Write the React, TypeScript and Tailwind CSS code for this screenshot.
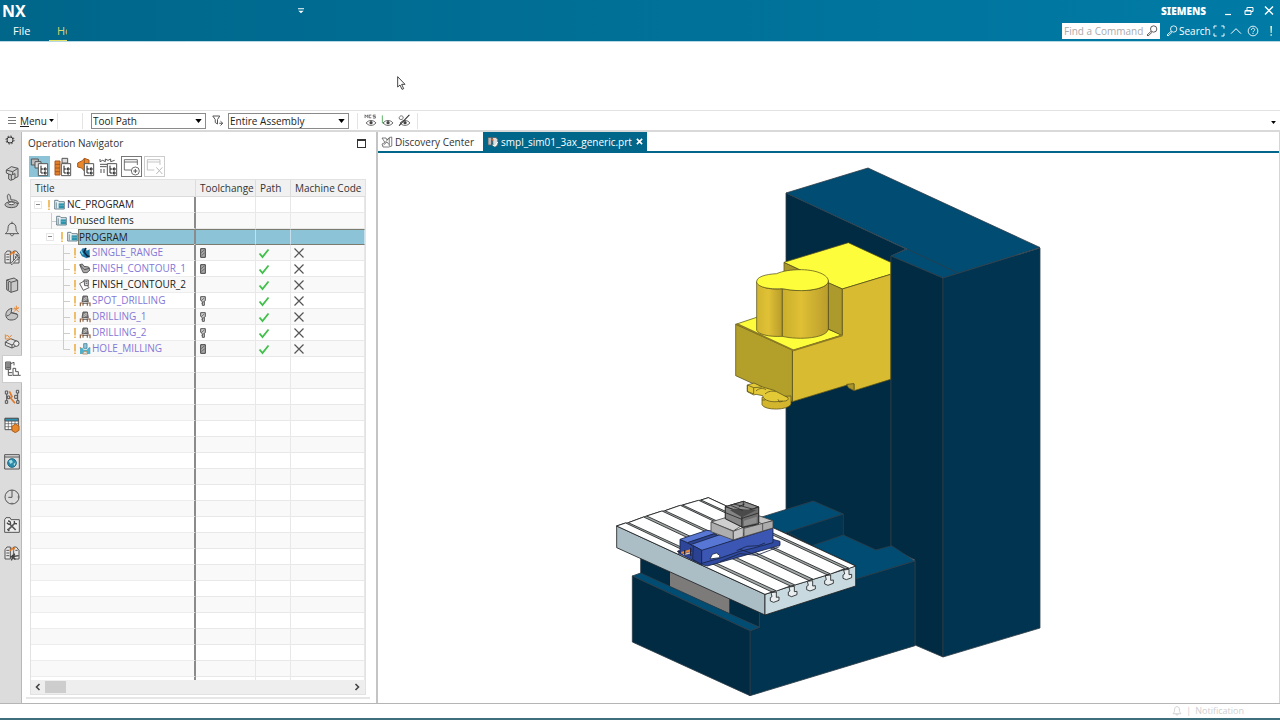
import { ReactNode } from "react";

type Kind = "range" | "contour" | "contour2" | "drill" | "mill";

interface Operation {
  name: string;
  kind: Kind;
  tool: "bar" | "drill" | null;
  visited?: boolean;
}

const operations: Operation[] = [
  { name: "SINGLE_RANGE", kind: "range", tool: "bar" },
  { name: "FINISH_CONTOUR_1", kind: "contour", tool: "bar" },
  { name: "FINISH_CONTOUR_2", kind: "contour2", tool: null, visited: true },
  { name: "SPOT_DRILLING", kind: "drill", tool: "drill" },
  { name: "DRILLING_1", kind: "drill", tool: "drill" },
  { name: "DRILLING_2", kind: "drill", tool: "drill" },
  { name: "HOLE_MILLING", kind: "mill", tool: "bar" },
];

const emptyRows = Array.from({ length: 21 }, (_, i) => i);

function Icon({ children, className = "size-4" }: { children: ReactNode; className?: string }) {
  return (
    <svg viewBox="0 0 48 48" fill="none" stroke="#555" strokeWidth="3" aria-hidden="true" className={`shrink-0 ${className}`}>
      {children}
    </svg>
  );
}

function Caret({ className = "h-[4px] w-[7px]" }: { className?: string }) {
  return (
    <svg viewBox="0 0 8 5" aria-hidden="true" className={`shrink-0 text-black ${className}`}>
      <path d="M0 0h8L4 5z" fill="currentColor" />
    </svg>
  );
}

/* ---------- window header ---------- */

function Magnifier({ className = "size-3" }: { className?: string }) {
  return (
    <svg viewBox="0 0 36 36" fill="none" stroke="currentColor" strokeWidth="2.6" aria-hidden="true" className={`shrink-0 ${className}`}>
      <circle cx="23" cy="12" r="9.5" />
      <path d="M15 19 3 30l3 3 12-11" />
    </svg>
  );
}

function Header() {
  return (
    <header className="flex h-[41px] shrink-0 flex-col bg-linear-to-r from-[#00668a] to-[#007ba6] text-white">
      <div className="flex h-[21px] items-center pr-[5px] pl-[2px]">
        <h1 className="w-6 font-['Noto_Sans',sans-serif] text-[16px] leading-[18px] font-bold">NX</h1>
        <button aria-label="Customize quick access" className="ml-[272px] flex h-4 w-2 items-center">
          <svg viewBox="0 0 18 18" className="size-1.5" aria-hidden="true">
            <path d="M0 1h18v3H0zM1 8h16l-8 8z" fill="#fff" />
          </svg>
        </button>
        <span className="ml-auto font-['Noto_Sans',sans-serif] text-[10px] leading-4 font-black">SIEMENS</span>
        <div className="ml-4 flex w-[53px] items-center justify-between">
          <button aria-label="Minimize" className="flex size-3 items-center justify-center">
            <svg viewBox="0 0 12 12" className="size-3" aria-hidden="true">
              <path d="M3 9.500h6" stroke="#fff" strokeWidth="1.200" />
            </svg>
          </button>
          <button aria-label="Restore" className="flex size-3 items-center justify-center">
            <svg viewBox="0 0 12 12" className="size-3" fill="none" stroke="#fff" aria-hidden="true">
              <path d="M2 5.500h6v4H2zM4 5V2.500h6v4H8M2 6h6" />
            </svg>
          </button>
          <button aria-label="Close" className="flex size-3 items-center justify-center">
            <svg viewBox="0 0 12 12" className="size-3" fill="none" stroke="#fff" strokeWidth="1.400" aria-hidden="true">
              <path d="m2 1.500 8 8m0-8-8 8" />
            </svg>
          </button>
        </div>
      </div>
      <div className="flex h-5 items-center pr-1 pl-[13px]">
        <nav className="flex h-5 items-center">
          <a href="#file" className="w-9 text-[11px] leading-[18px]">File</a>
          <a href="#home" className="block h-[19px] w-[18px] overflow-hidden border-b border-[#e3e36c] pl-2 text-[11px] leading-[18px] whitespace-nowrap text-[#d7d56a]">
            Ho
          </a>
        </nav>
        <label className="ml-auto flex h-4 w-[98px] items-center bg-white px-0.5 text-[#444]">
          <input aria-label="Find a Command" placeholder="Find a Command" className="w-0 grow text-[10px] leading-4 outline-none placeholder:text-[#aaa]" />
          <Magnifier />
        </label>
        <button className="ml-1.5 flex w-[43px] items-center gap-px text-[10px] leading-4">
          <Magnifier />
          Search
        </button>
        <div className="ml-1 flex items-center gap-[5px]">
          <button aria-label="Full screen" className="size-3">
            <svg viewBox="0 0 36 36" className="size-3" fill="none" stroke="#fff" strokeWidth="3" aria-hidden="true">
              <path d="M3 11V3h8M25 3h8v8M33 25v8h-8M11 33H3v-8" />
            </svg>
          </button>
          <button aria-label="Minimize ribbon" className="size-3">
            <svg viewBox="0 0 36 36" className="size-3" fill="none" stroke="#fff" strokeWidth="3" aria-hidden="true">
              <path d="m3 26 15-15 15 15" />
            </svg>
          </button>
          <button aria-label="Help" className="size-3">
            <svg viewBox="0 0 36 36" className="size-3" fill="none" stroke="#fff" strokeWidth="2.600" aria-hidden="true">
              <circle cx="18" cy="18" r="14.500" />
              <path d="M13 15c0-7 10-7 10-1 0 4-5 4-5 8m0 2v3" />
            </svg>
          </button>
          <button aria-label="Alerts" className="size-3">
            <svg viewBox="0 0 36 36" className="size-3" aria-hidden="true">
              <path d="M19 3h5l-1 21h-3zM19.500 28h4v4h-4z" fill="#eef3c4" />
            </svg>
          </button>
        </div>
      </div>
    </header>
  );
}

/* ---------- selection toolbar ---------- */

function Picker({ label, options, className }: { label: string; options: string[]; className: string }) {
  return (
    <label className={`relative flex h-4 items-center border border-[#8a8a8a] bg-white ${className}`}>
      <select aria-label={label} className="w-full appearance-none pl-px text-[10px] leading-[14px] outline-none">
        {options.map((o) => (
          <option key={o}>{o}</option>
        ))}
      </select>
      <Caret className="pointer-events-none absolute right-[3px] h-[4px] w-[7px]" />
    </label>
  );
}

function Eye() {
  return (
    <>
      <path d="M8 33c9-12 27-12 36 0-9 12-27 12-36 0z" fill="#fff" stroke="#444" />
      <circle cx="26" cy="32" r="6" fill="#444" stroke="none" />
    </>
  );
}

function Toolbar() {
  return (
    <div className="flex h-[22px] shrink-0 items-center border-t border-b-2 border-[#e2e2e2] border-b-[#d9d9d9] pr-1 pl-2">
      <button className="flex w-[49px] items-center gap-1 text-[10px] leading-4">
        <svg viewBox="0 0 8 8" className="size-2 shrink-0" stroke="#777" aria-hidden="true">
          <path d="M0 .5h8M0 3.500h8M0 6.500h8" />
        </svg>
        <span><span className="underline">M</span>enu</span>
        <Caret className="-ml-0.5 h-[3px] w-[5px]" />
      </button>
      <span className="h-4 w-[26px] border-x border-[#e4e4e4]" />
      <Picker label="Type filter" options={["Tool Path", "No Selection Filter"]} className="ml-2 w-[115px]" />
      <button aria-label="Selection filter" className="ml-1.5 flex">
        <Icon className="size-3">
          <path d="M3 4h28l-9 14v18l-9-6V18zM34 25l9 8-9 9m9-9H29" strokeWidth="4" />
        </Icon>
      </button>
      <Picker label="Selection scope" options={["Entire Assembly", "Within Work Part Only"]} className="ml-1 w-[121px]" />
      <div className="ml-2 flex h-4 items-center gap-1 border-x border-[#e4e4e4] px-1.5">
        <button aria-label="Show MCS" className="flex">
          <Icon className="size-[13px]">
            <path d="M4 15V3l5 6 5-6v12M27 4h-8v10h8M43 4h-9v5h8v6h-9" />
            <Eye />
          </Icon>
        </button>
        <button aria-label="Show tool path" className="flex">
          <Icon className="size-[13px]">
            <path d="M5 5v28h10" stroke="#3fa34a" />
            <Eye />
          </Icon>
        </button>
        <button aria-label="Hide all" className="flex">
          <Icon className="size-[13px]">
            <path d="M4 14c2-8 12-10 15-3 3 8-8 12-13 8z" />
            <Eye />
            <path d="M42 3 4 43" stroke="#333" strokeWidth="4" />
          </Icon>
        </button>
      </div>
      <button aria-label="More options" className="mt-1 ml-auto flex">
        <Caret className="h-[3px] w-[5px]" />
      </button>
    </div>
  );
}

/* ---------- resource bar ---------- */

const blocks = (
  <>
    <path d="M3 42V14l6-8h10v36zM29 42V6h8l8 10v26z" fill="#e9e9e9" />
    <path d="M7 16h9M7 24h9M7 32h9M34 16h7" />
    <path d="m19 18 5-9 4 6 4-8" stroke="#e27a22" strokeWidth="4" />
  </>
);

const resources: { label: string; gap?: string; active?: boolean; art: ReactNode }[] = [
  {
    label: "Assembly Navigator",
    gap: "mt-[11px]",
    art: (
      <>
        <path d="m7 15 15-10 20 5v25l-9 4-2 3-11 4-6-4V27l-7-3z" fill="#cfcfcf" />
        <path d="m7 15 19 5 16-10M26 20v10m-12-3 8 3 11-4v13M22 30v15" />
      </>
    ),
  },
  {
    label: "Constraint Navigator",
    art: (
      <>
        <path d="M13 4c-5 2-4 14 4 24l27 4c-2-9-14-13-23-11C20 12 18 3 13 4z" fill="#d0d0d0" />
        <ellipse cx="22" cy="35" rx="19" ry="9" fill="#bbb" />
        <ellipse cx="22" cy="31" rx="9" ry="4" fill="#eee" />
      </>
    ),
  },
  {
    label: "Notifications",
    art: (
      <path d="M24 2v5M24 7c-9 0-12 7-12 16 0 8-3 10-8 15h40c-5-5-8-7-8-15 0-9-3-16-12-16zM19 39c0 7 10 7 10 0" />
    ),
  },
  {
    label: "Part Navigator",
    art: (
      <>
        {blocks}
        <path d="M20 44 35 28c-2-6 2-10 7-9l-4 6 3 3 5-4c1 6-3 9-8 8L24 47z" fill="#eee" />
      </>
    ),
  },
  {
    label: "Reuse Library",
    art: (
      <>
        <path d="m8 9 22-6 11 7v30l-20 6L8 38z" fill="#c9c9c9" />
        <path d="m8 9 13 7v30M21 16l20-6M13 15v24" />
      </>
    ),
  },
  {
    label: "Machining Features",
    art: (
      <>
        <path d="M6 34c-2-12 5-22 18-24l-3 13 19 5c4 8-3 16-16 17C14 46 8 42 6 34z" fill="#c5c5c5" />
        <path d="M8 33c8-2 12-6 13-10 6 0 14 2 19 5" />
        <path d="m30 8 14 12M44 6 30 20M37 2v10m-9 0 16-2" stroke="#e58a3a" />
      </>
    ),
  },
  {
    label: "Feature Explorer",
    art: (
      <>
        <path d="m4 27 16-10 20 8v12L24 45 4 37z" fill="#e2e2e2" />
        <path d="m4 27 20 9 16-11M24 36v9" />
        <path d="M4 4v14h18M4 12l6-6 6 8 7-8" stroke="#e58a3a" />
        <circle cx="37" cy="32" r="8" fill="#eee" />
      </>
    ),
  },
  {
    label: "Operation Navigator",
    active: true,
    art: (
      <>
        <path d="M2 3h15v22H2zM4 9h11M4 15h11M4 20h11" fill="#bbb" />
        <path d="M17 8l10-4v9M10 26v17h12M10 35h12M24 22h8v10h8v11h7M24 22v21h16" />
      </>
    ),
  },
  {
    label: "Machine Tool Navigator",
    art: (
      <>
        <path d="m16 7 8 16-4 4 13 16" stroke="#e07a28" strokeWidth="5" />
        <path d="M4 6h7v9H4zM10 21h7v8h-7zM4 35h7v8H4zM37 4h7v8h-7zM32 19h8v9h-8zM38 35h7v8h-7zM8 15v20m33-23v23" />
      </>
    ),
  },
  {
    label: "Tool Library",
    art: (
      <>
        <path d="M3 4h40v34H3z" fill="#fff" />
        <path d="M3 4h40v8H3z" fill="#2a93b5" />
        <path d="M3 20h40M3 29h40M13 12v26M23 12v26M33 12v26" strokeWidth="2" />
        <path d="m24 28 10-7 11 6v13l-11 7-10-6z" fill="#e8882c" stroke="#a9601d" />
      </>
    ),
  },
  {
    label: "Web Browser",
    gap: "mt-[9px]",
    art: (
      <>
        <path d="M2 2h44v43H2zM2 9h44" fill="#ddd" />
        <circle cx="24" cy="27" r="13" fill="#2b8ca9" stroke="#1c6c88" />
        <path d="m14 20 9-3 4 8-8 5zM28 30l7-5-3 11z" fill="#a5dbe6" stroke="none" />
      </>
    ),
  },
  {
    label: "History",
    gap: "mt-[7px]",
    art: (
      <>
        <circle cx="24" cy="24" r="21" />
        <path d="M24 3v22H13M24 41v4M41 24h4" />
      </>
    ),
  },
  {
    label: "Process Studio",
    art: (
      <>
        <path d="M2 46V8l4-6h12l3 6h25v38z" fill="#eee" />
        <path d="m13 38 20-20M17 21l18 18" stroke="#555" strokeWidth="5" />
        <path d="M9 17c3 6 8 6 12 2M12 12c6 0 8 3 7 7M31 12c-1 6 2 9 8 8M10 37l6 5" stroke="#444" strokeWidth="4" />
      </>
    ),
  },
  { label: "Roles", art: (<>{blocks}<path d="m18 36 26-4M22 46l10-20m-8 4 10 14" strokeWidth="4" stroke="#444" /></>) },
];

function ResourceBar() {
  return (
    <aside className="flex w-[22px] shrink-0 flex-col border-r border-[#b9b9b9] bg-[#dcdcdc]">
      <button aria-label="Resource bar options" className="flex h-4 items-center justify-center">
        <svg viewBox="0 0 30 30" className="mr-0.5 size-2.5" fill="none" stroke="#333" strokeWidth="3" aria-hidden="true">
          <circle cx="15" cy="15" r="9" />
          <circle cx="15" cy="15" r="12" strokeDasharray="4.700 4.700" />
        </svg>
      </button>
      {resources.map((r) => (
        <button
          key={r.label}
          aria-label={r.label}
          className={`ml-0.5 flex h-7 shrink-0 items-center justify-center ${r.gap ?? ""} ${r.active ? "-mr-px border-y border-l border-[#ccc] bg-white" : ""}`}
        >
          <Icon>{r.art}</Icon>
        </button>
      ))}
    </aside>
  );
}

/* ---------- operation navigator ---------- */

const treeBadge = (
  <>
    <path d="M25 20h28v36H25z" fill="#fff" strokeWidth="3" />
    <path d="M33 26v22h7M33 36h7M43 33h5v6h-5zM43 45h5v6h-5z" stroke="#222" />
  </>
);

const views: { label: string; style: string; art: ReactNode }[] = [
  {
    label: "Program Order View",
    style: "bg-[#8cc3d6]",
    art: (<><path d="M4 6h21v18H4z" fill="#bbb" /><path d="M15 14h18v19H15z" fill="#ddd" />{treeBadge}</>),
  },
  {
    label: "Machine Tool View",
    style: "",
    art: (<><path d="M6 12h15v42H6zM6 22h15M6 33h15M6 44h15" fill="#e2802c" stroke="#a8571a" /><path d="M27 4h17v14H27z" fill="#ddd" />{treeBadge}</>),
  },
  {
    label: "Geometry View",
    style: "",
    art: (<><path d="m5 18 14-7 6-7 14 5v26l-14 7-8-9-12-3z" fill="#e8882c" stroke="#a8571a" /><path d="M25 4v18" stroke="#a8571a" />{treeBadge}</>),
  },
  {
    label: "Machining Method View",
    style: "",
    art: (<><path d="M3 6v8l8-4 8 4V6l8 4 8-4v8l12-4M3 22h45M3 29h20M6 36v12m9-12v12" />{treeBadge}</>),
  },
  {
    label: "Create Operation",
    style: "border border-[#777]",
    art: (<><path d="M46 24V8H7v31h21M7 15h39" strokeWidth="2.500" /><circle cx="40" cy="42" r="12" fill="#fff" strokeWidth="2.500" /><path d="M34 42h12M40 36v12" /></>),
  },
  {
    label: "Delete Operation",
    style: "border border-[#ccc]",
    art: (<g stroke="#bbb"><path d="M45 24V8H7v31h21M7 15h38" strokeWidth="2.500" /><path d="m34 31 18 20m0-20L34 51" /></g>),
  },
];

function Folder() {
  return (
    <svg viewBox="0 0 33 33" className="size-[11px] shrink-0" aria-hidden="true">
      <path d="M2 30V4h10l3 4h16v22z" fill="#e6eff2" stroke="#54707c" strokeWidth="2.500" />
      <path d="M7 10v18" stroke="#54707c" strokeWidth="2" />
      <path d="M14 13h16v15H14z" fill="#2e93ac" />
      <path d="M14 19h16" stroke="#6fbccf" strokeWidth="2" />
    </svg>
  );
}

function OperationIcon({ kind }: { kind: Kind }) {
  return (
    <svg viewBox="0 0 36 36" fill="none" stroke="#444" strokeWidth="2.500" className="size-3 shrink-0" aria-hidden="true">
      {kind === "range" && (
        <>
          <path d="M11 4h9l3 7 9-4v22l-9 5-14-6-7-12z" fill="#1c78a5" stroke="none" />
          <path d="m21 3-6 12 10 12 7 2" stroke="#10253f" strokeWidth="5" />
          <path d="M6 10c3 4 1 9 7 12" stroke="#74d4e8" strokeWidth="4" />
        </>
      )}
      {kind === "contour" && (
        <>
          <path d="m2 5 8-2 5 7 14 2 4 9-9 8H13L8 19z" fill="#aaa" />
          <path d="M5 6c0 8 9 9 11 14l16-4" />
        </>
      )}
      {kind === "contour2" && (
        <>
          <path d="m2 14 13-8 15 20-17 8z" fill="#fff" />
          <path d="M15 3h13v17H17zM19 8h6m-5 5h5" fill="#ddd" />
        </>
      )}
      {kind === "drill" && (
        <>
          <path d="M12 3h13l3 17H9z" fill="#888" stroke="#444" />
          <path d="M14 12 24 6M13 18l12-8" stroke="#ddd" strokeWidth="2" />
          <path d="M4 34V24h8v8m13 0v-8h8v10" stroke="#8b5d40" strokeWidth="3.500" />
          <path d="M12 25h13" stroke="#444" />
        </>
      )}
      {kind === "mill" && (
        <>
          <path d="M14 2h10v14H14z" fill="#93c8dc" stroke="#49819a" />
          <path d="M3 14h7l4 6h10l4-6h6v19H3z" fill="#4fb2cc" stroke="none" />
          <path d="M4 12v5M32 12v5M11 33l3-8h9l3 8z" stroke="#b98552" fill="#d6e6e9" />
        </>
      )}
    </svg>
  );
}

function Bang() {
  return (
    <svg viewBox="0 0 4 12" className="h-3 w-1 shrink-0" aria-hidden="true">
      <path d="M1.300 1h1.400v7.500H1.300zM1.300 9.500h1.400v1.500H1.300z" fill="#eca52c" />
    </svg>
  );
}

function Expander() {
  return (
    <button aria-label="Collapse" className="flex size-2 shrink-0 items-center justify-center border border-[#e6e6e6] bg-white">
      <span className="h-px w-1 bg-[#888]" />
    </button>
  );
}

function ToolMark({ tool }: { tool: Operation["tool"] }) {
  if (!tool) return null;
  return (
    <svg viewBox="0 0 18 30" className="ml-1 h-[10px] w-1.5" stroke="#555" strokeWidth="3" aria-hidden="true">
      {tool === "bar" ? (
        <path d="M2 2h14v26H2z" fill="#aaa" stroke="#444" />
      ) : (
        <path d="M2 2h14v11l-3 4v11H7V17l-5-4z" fill="#ccc" />
      )}
      <path d="m4 14 9-8M5 23l9-9" strokeWidth="2.500" />
    </svg>
  );
}

const cell = "h-4 border-b border-[#ededed] p-0";
const dataCell = "h-4 border-r border-b border-[#e8e8e8] p-0";

function OperationTable() {
  return (
    <table className="w-full table-fixed border-separate border-spacing-0 text-[10px] leading-[15px]">
      <colgroup>
        <col />
        <col className="w-[60px]" />
        <col className="w-[35px]" />
        <col className="w-[74px]" />
      </colgroup>
      <thead>
        <tr className="bg-[#f1f1f1] text-left text-[#333]">
          <th className="h-[17px] border-r border-b border-[#dcdcdc] p-0 pl-1 font-normal">Title</th>
          <th className="border-r border-b border-[#dcdcdc] p-0 pl-1 font-normal">Toolchange</th>
          <th className="border-r border-b border-[#dcdcdc] p-0 pl-1 font-normal">Path</th>
          <th className="border-b border-[#dcdcdc] p-0 pl-1 font-normal whitespace-nowrap">Machine Code</th>
        </tr>
      </thead>
      <tbody className="text-[#222] [&>tr:nth-child(even)]:bg-[#f9f9f9] [&>tr>td:first-child]:border-r-2 [&>tr>td:first-child]:border-r-[#8b8b8b]">
        <tr>
          <td className={cell}>
            <div className="flex h-[15px] items-center pl-[3px]">
              <Expander />
              <span className="ml-[5px] flex"><Bang /></span>
              <span className="ml-[3px] flex"><Folder /></span>
              <span className="ml-0.5">NC_PROGRAM</span>
            </div>
          </td>
          <td className={dataCell} /><td className={dataCell} /><td className={dataCell} />
        </tr>
        <tr>
          <td className={cell}>
            <div className="flex h-[15px] items-center pl-5">
              <svg viewBox="0 0 5 16" className="h-4 w-[5px] shrink-0" fill="none" stroke="#ccc" aria-hidden="true">
                <path d="M.5 0v16M.5 8.500H5" />
              </svg>
              <Folder />
              <span className="ml-0.5">Unused Items</span>
            </div>
          </td>
          <td className={dataCell} /><td className={dataCell} /><td className={dataCell} />
        </tr>
        <tr>
          <td className={cell}>
            <div className="flex h-[15px] items-center pl-[15px]">
              <Expander />
              <span className="ml-1.5 flex"><Bang /></span>
              <span className="ml-[3px] flex"><Folder /></span>
              <span className="h-4 grow border-y border-l border-[#7b7b6e] bg-[#8cc3d6] leading-[14px]">PROGRAM</span>
            </div>
          </td>
          {[0, 1, 2].map((i) => (
            <td key={i} className="h-4 border-y border-r border-y-[#7b7b6e] border-r-[#c5e0ea] bg-[#8cc3d6] p-0" />
          ))}
        </tr>
        {operations.map((op, i) => (
          <tr key={op.name}>
            <td className={cell}>
              <div className="flex h-[15px] items-center pl-8">
                <svg viewBox="0 0 8 16" className="h-4 w-2 shrink-0" fill="none" stroke="#ccc" aria-hidden="true">
                  <path d={i === operations.length - 1 ? "M.5 0v8.500H7" : "M.5 0v16M.5 8.500H7"} />
                </svg>
                <span className="ml-0.5 flex"><Bang /></span>
                <span className="ml-0.5 flex"><OperationIcon kind={op.kind} /></span>
                <a href={`#${op.name}`} className={`ml-px whitespace-nowrap ${op.visited ? "text-[#222]" : "text-[#8377d6]"}`}>
                  {op.name}
                </a>
              </div>
            </td>
            <td className={dataCell}><ToolMark tool={op.tool} /></td>
            <td className={dataCell}>
              <svg viewBox="0 0 12 12" className="ml-0.5 size-3" fill="none" stroke="#3fc04a" strokeWidth="1.800" aria-hidden="true">
                <path d="m1.500 6.500 3 3.500 6-7.500" />
              </svg>
            </td>
            <td className={dataCell}>
              <svg viewBox="0 0 12 12" className="ml-0.5 size-3" stroke="#555" strokeWidth="1.200" aria-hidden="true">
                <path d="m1.500 1.500 9 9m0-9-9 9" />
              </svg>
            </td>
          </tr>
        ))}
        {emptyRows.map((r) => (
          <tr key={r}>
            <td className={cell} /><td className={dataCell} /><td className={dataCell} /><td className={dataCell} />
          </tr>
        ))}
      </tbody>
    </table>
  );
}

function Navigator() {
  return (
    <section className="flex w-[356px] shrink-0 flex-col border-r-2 border-[#c4c4c4] pb-1">
      <div className="flex h-[22px] items-center justify-between pr-2.5 pl-1.5">
        <h2 className="text-[10px] leading-5 text-[#333]">Operation Navigator</h2>
        <button aria-label="Maximize" className="size-[9px] border border-t-2 border-[#333]" />
      </div>
      <div className="flex h-[25px] items-center gap-0.5 px-[7px]">
        {views.map((v) => (
          <button key={v.label} aria-label={v.label} className={`flex size-[21px] items-center justify-center ${v.style}`}>
            <svg viewBox="0 0 60 60" fill="none" stroke="#555" strokeWidth="3" className="size-5 shrink-0" aria-hidden="true">
              {v.art}
            </svg>
          </button>
        ))}
      </div>
      <div className="mr-2.5 ml-2 flex min-h-0 grow flex-col border border-[#e2e2e2]">
        <div className="min-h-0 grow basis-0 overflow-hidden">
          <OperationTable />
        </div>
        <div className="flex h-3.5 shrink-0 items-center bg-[#eee]">
          <button aria-label="Scroll left" className="flex w-3.5 justify-center">
            <svg viewBox="0 0 8 8" className="size-2" fill="none" stroke="#444" strokeWidth="1.600" aria-hidden="true"><path d="M5.500 1 2.500 4l3 3" /></svg>
          </button>
          <div className="h-3 w-[21px] bg-[#cdcdcd]" />
          <button aria-label="Scroll right" className="ml-auto flex w-4 justify-center">
            <svg viewBox="0 0 8 8" className="size-2" fill="none" stroke="#444" strokeWidth="1.600" aria-hidden="true"><path d="m2.500 1 3 3-3 3" /></svg>
          </button>
        </div>
      </div>
      <div className="mt-0.5 mr-1.5 ml-1 h-0.5 bg-[#e6e6e6]" />
    </section>
  );
}

/* ---------- graphics window ---------- */

/* table strips between the T-slots: back edge, then front edge */
const strips = [
  "50,138 77,129 516,336 495,343",
  "85,128 131,111 571,318 530,333",
  "140,108 186,93 628,302 585,315",
  "195,92 241,76 682,285 640,298",
  "248,75 296,61 734,266 692,282",
  "303,60 325,53 767,258 748,265",
];

const slots = [521, 575, 630, 684, 739];

function Machine() {
  return (
    <svg viewBox="378 153 901 550" className="h-full w-full" role="img" aria-label="Three axis milling machine model">
      <defs>
        <linearGradient id="cylA"><stop offset="0" stopColor="#d2b52f" /><stop offset=".45" stopColor="#e0c136" /><stop offset="1" stopColor="#b79c2b" /></linearGradient>
        <linearGradient id="cylB"><stop offset="0" stopColor="#caae2c" /><stop offset=".4" stopColor="#dfc035" /><stop offset="1" stopColor="#b99d2c" /></linearGradient>
      </defs>
      <g stroke="#2d3c47" strokeWidth=".8" strokeLinejoin="round">
        <path d="M786 193 906 249l-15 7v294H786z" fill="#002b42" />
        <path d="M786 193 868 168l172 79.500L943 278l-52-22 16-7z" fill="#004c73" />
        <path d="m907 249 51 24" fill="none" />
        <path d="m891 256 52 22v379l-28-12v-85l-24-12z" fill="#002b42" />
        <path d="m943 278 97-30v380l-97 29z" fill="#003450" />
      </g>
      <g transform="translate(600 480) scale(.33333)" stroke="#2d3c47" strokeWidth="2.500" strokeLinejoin="round">
        <path d="m560 155 170-53v66L640 200z" fill="#003450" />
        <path d="m440 125 200-62 90 39-185 60z" fill="#004c73" />
        <path d="M560 223 730 165l98 45 47-13 70 46-200 62z" fill="#004c73" />
        <path d="m450 452 28-10v-60l290-85 177-54v254L450 647z" fill="#003450" />
        <path d="m122 230 356 150v62L122 288z" fill="#002b42" />
        <path d="m210 270 178 80v50l-178-80z" fill="#7d7b7a" stroke="none" />
        <path d="m97 288 25-9 356 163-28 10z" fill="#004c73" />
        <path d="m97 288 353 164v195L97 486z" fill="#002b42" />
      </g>
      <g transform="translate(600 480) scale(.33333)" stroke="#1e2022" strokeWidth="2.500" strokeLinejoin="round">
        <path d="m50 138 23-8 12-2 40-15 15-5 40-13 15-3 40-14 13-3 42-12 13-3 22-7 442 205-272 85z" fill="#a4a9a9" />
        <path d="m50 138 445 205v62L50 203z" fill="#abbec6" />
        <path d="m495 343 272-85v60l-272 87z" fill="#c8d9df" />
        {strips.map((s) => (
          <polygon key={s} points={s} fill="#fff" />
        ))}
        {slots.map((x, i) => (
          <path
            key={x}
            d={`M${x - 8} ${338 - i * 17}l3 12-5 3v10l10 4 16-6v-10l-8 1v-16z`}
            fill="#e9eef0"
          />
        ))}
      </g>
      {/* vise and workpiece */}
      <g transform="translate(600 480) scale(.33333)" stroke="#182446" strokeWidth="2.500" strokeLinejoin="round">
        <path d="m232 214 70 39 20 5 218-62v-12l-28-8-222 40z" fill="#2f4aa0" />
        <path d="m240 178 45 22v44l-45-22z" fill="#2d469a" />
        <path d="m240 178 80-27 38 5-95 32z" fill="#5877d4" />
        <path d="m263 188 78-26 25 10-84 28z" fill="#2d4594" />
        <path d="m272 194 85-29 85 8 76-29-210 68z" fill="#5877d4" />
        <path d="m280 197 25 14v42l-27-15z" fill="#2b4293" />
        <path d="m305 211 214-67v44l-58 16-42 10-58 20-56 16z" fill="#3b56b3" />
        <path d="m330 237 7-14 12-4 10 7v7z" fill="#fff" />
        <path d="m410 212 30-13 35-2 20-8M360 245l60-24 50 5 68-26M420 208l40 14" fill="none" />
        <path d="m244 219 28-8" stroke="#e48a3d" strokeWidth="7" />
        <path d="M250 224l24-6" stroke="#e9c9a8" strokeWidth="4" />
        <path d="M237 210v14M272 203v24M254 210v14" stroke="#25233d" strokeWidth="4" />
        <g stroke="#444">
          <path d="m333 126 50-15 48 22-31 20z" fill="#cfcfcf" />
          <path d="m333 126 67 28v26l-67-25z" fill="#aeaeae" />
          <path d="m400 154 30-12v28l-30 10z" fill="#c5c5c5" />
          <path d="m467 104 52 18-31 10-24-10z" fill="#c6c6c6" />
          <path d="m432 145 87-23v22l-87 26z" fill="#adadad" />
          <path d="m488 132v20" />
        </g>
        <g stroke="#252525">
          <path d="m376 80 54-16 46 17v50l-46 12-54-27z" fill="#777" />
          <path d="m376 80 54-16 46 17-50 17z" fill="#8e8e8e" />
          <path d="m376 80 50 18v43l-50-25z" fill="#858585" />
          <path d="m426 98 50-17v50l-50 11z" fill="#6f6f6f" />
          <path d="m390 91 12-5 68 4-44 22z" fill="#4a4a4a" stroke="none" />
          <path d="m426 115 50-16M376 98l50 20M392 76l36 15M402 72l55 15M416 81l18-9M430 64v14" fill="none" />
          <path d="m432 122 38-12v18l-38 10z" fill="#8d8d8d" stroke="none" />
        </g>
      </g>
      {/* spindle head */}
      <g transform="translate(720 230) scale(.33333)" stroke="#57501c" strokeWidth="2.200" strokeLinejoin="round">
        <path d="m192 97 135 63v40l-135-60z" fill="#a8962c" />
        <path d="M192 97 385 38l127 59v36l-145 44-40-17z" fill="#fdfd3c" />
        <path d="m47 283 63-21 215 36 42 17-148 47z" fill="#fdfd3c" />
        <path d="m325 158 42 19v140l-42-20z" fill="#ad9a2c" />
        <path d="m367 177 145-44v315l-110 34v-20l-17 2-168 51V362l150-46z" fill="#d8bb30" />
        <path d="m380 463 22-2v21l-17-9z" fill="#a8962c" />
        <path d="m47 283 170 77v155L47 437z" fill="#b3a02b" />
        <path d="m50 281 170 80 147-45" stroke="#8d7c24" strokeWidth="5" fill="none" />
        <path d="M110 155v146c6 12 35 20 77 18V176c-42 4-70-5-77-21z" fill="url(#cylA)" />
        <path d="M187 176v143c50 12 138 6 138-24V152c0 26-72 37-138 24z" fill="url(#cylB)" />
        <path d="M110 155c0-14 24-22 60-24 18-8 42-12 75-12 48 1 80 17 80 34s-38 28-80 29c-24 0-42-3-58-6-42 3-77-6-77-21z" fill="#fdfd3c" />
        <path d="M126 502v22c6 18 80 18 87-2v-24z" fill="#d3b52e" />
        <path d="m82 465 20-6 26 12 34 10 42 22c4 8-8 12-22 10-22 6-52 0-54-16l-20-4-7 2-19-10z" fill="#e3c935" />
        <path d="m82 465 19 8v19l-19-8zM101 473l25-2M108 483c10-10 22-9 30-4M135 492c10-9 22-10 32-7M126 510h10m38-2 4 8 10-2" fill="none" />
      </g>
    </svg>
  );
}

function GraphicsWindow() {
  return (
    <main className="flex min-w-0 grow flex-col border-r border-[#d5d5d5]">
      <div className="flex h-[21px] shrink-0 border-b-2 border-[#00668a] text-[10px] leading-[18px]">
        <button className="flex w-[105px] items-center gap-0.5 pl-[3px] whitespace-nowrap text-[#333]">
          <Icon className="size-3">
            <path d="M4 8h16l4 8 9-10 10-2v36l-12 4H8l-4-12 12-6zM16 26l17-18M33 8v32M10 36l14-12 8 10" />
          </Icon>
          Discovery Center
        </button>
        <div className="flex items-center bg-[#00668a] pr-1 pl-1 text-white">
          <button className="flex items-center gap-0.5 whitespace-nowrap">
            <Icon className="size-3">
              <path d="M4 6h14v30H4z" fill="#b9b9b9" />
              <path d="M22 6h14l7 8v22l-10 8-9-6z" fill="#ddd" />
              <path d="m18 12 8 6" stroke="#e0682c" strokeWidth="5" />
              <path d="m22 36 9 5 12-17" stroke="#fff" strokeWidth="4" />
            </Icon>
            smpl_sim01_3ax_generic.prt
          </button>
          <button aria-label="Close tab" className="ml-1 flex">
            <svg viewBox="0 0 8 8" className="size-[7px]" stroke="#fff" strokeWidth="1.800" aria-hidden="true">
              <path d="m1 1 6 6m0-6L1 7" />
            </svg>
          </button>
        </div>
      </div>
      <div className="min-h-0 grow">
        <Machine />
      </div>
    </main>
  );
}

export default function App() {
  return (
    <div className="relative flex h-screen flex-col overflow-hidden bg-white font-['Open_Sans','Noto_Sans',sans-serif] text-[#222]">
      <Header />
      <div className="h-[69px] shrink-0 border-t border-[#b5d8e4]" />
      <Toolbar />
      <div className="flex min-h-0 grow">
        <ResourceBar />
        <Navigator />
        <GraphicsWindow />
      </div>
      <footer className="flex h-[17px] shrink-0 items-center justify-end gap-1 border-t border-b-2 border-t-[#b5b5b5] border-b-[#3e6f7d] pr-9 text-[9px] leading-[14px] text-[#cfcfcf]">
        <Icon className="size-2.5">
          <path d="M24 3c-10 0-12 9-12 18 0 8-3 11-7 16h38c-4-5-7-8-7-16 0-9-2-18-12-18zM18 38c0 8 12 8 12 0" stroke="#bbb" />
        </Icon>
        <span>|</span>
        <span>Notification</span>
      </footer>
      <svg viewBox="0 0 27 42" className="pointer-events-none absolute top-[76px] left-[397px] h-3.5 w-[9px]" aria-hidden="true">
        <path d="M2 2v31l7-6 6 13 5-2-6-13h10z" fill="#fff" stroke="#222" strokeWidth="2.500" />
      </svg>
    </div>
  );
}
